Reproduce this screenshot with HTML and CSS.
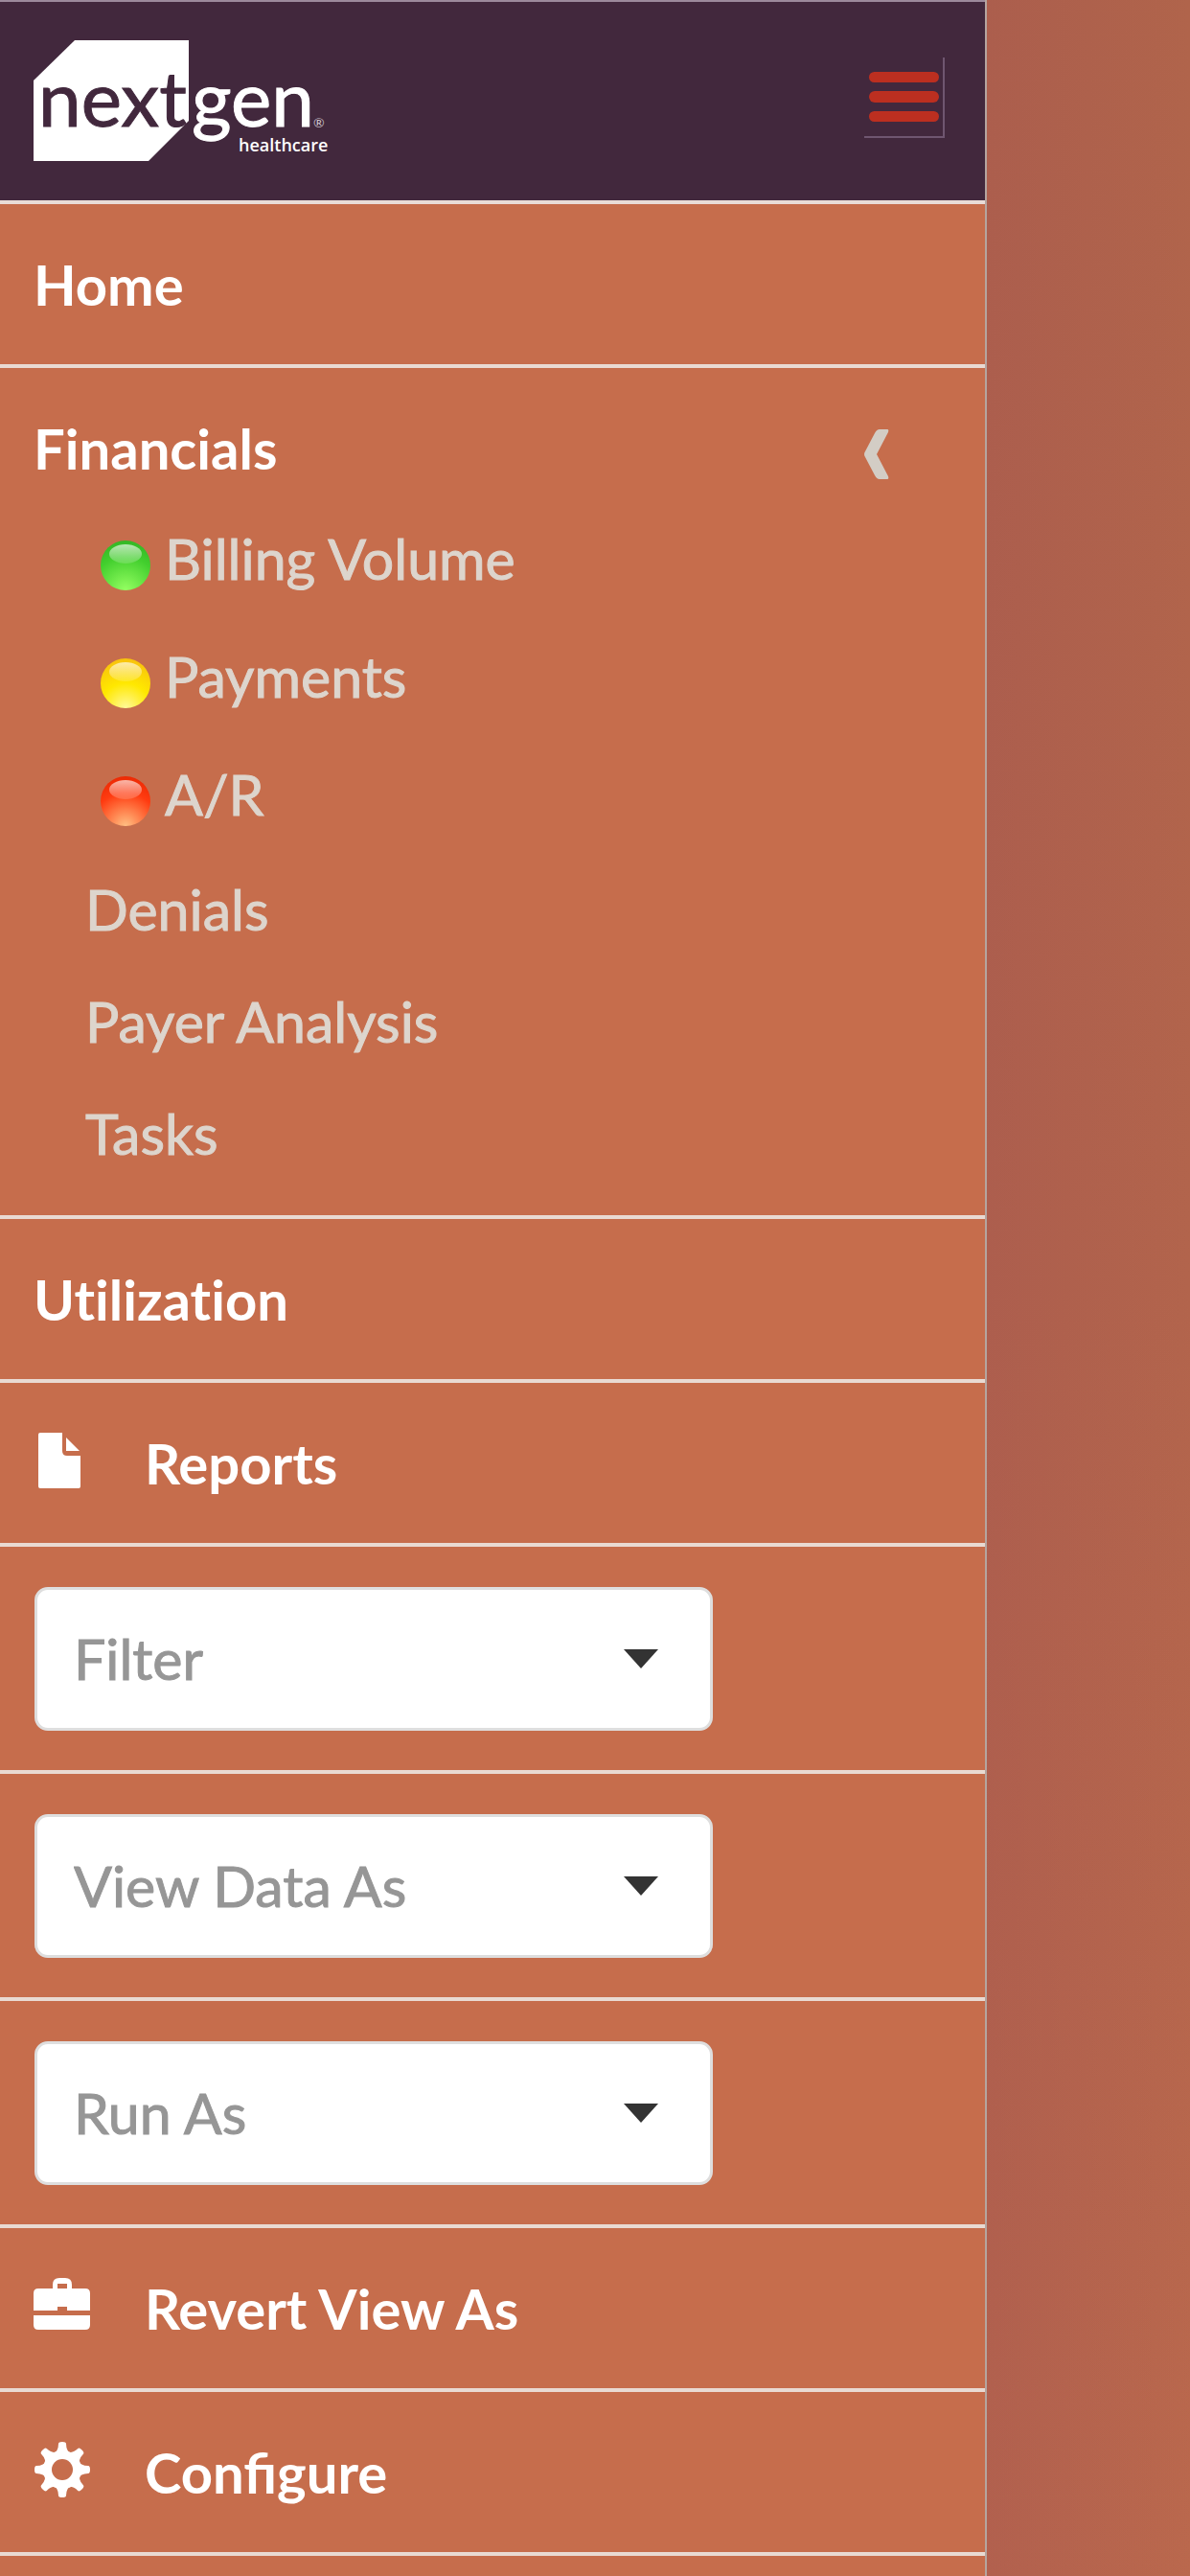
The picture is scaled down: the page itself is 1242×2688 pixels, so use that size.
FILE: index.html
```
<!DOCTYPE html>
<html lang="en">
<head>
    <meta charset="UTF-8">
    <meta name="viewport" content="width=device-width, initial-scale=1.0">
    <title>NextGen Healthcare</title>
    <link rel="stylesheet" href="styles.css">
</head>
<body>
    <div class="page">
        <nav class="sidebar">
            <header class="topbar">
                <a href="#" class="logo" aria-label="NextGen Healthcare">
                    <svg width="320" height="126" viewBox="0 0 320 126">
                        <polygon points="43,0 162,0 162,84 120,126 0,126 0,42" fill="#fff"/>
                        <text class="logo-next" x="5" y="90">next</text>
                        <text class="logo-gen" x="165" y="90">gen</text>
                        <text class="logo-reg" x="292" y="91">®</text>
                        <text class="logo-sub" x="214" y="116">healthcare</text>
                    </svg>
                </a>
                <button type="button" class="menu-toggle" aria-label="Toggle menu">
                    <span></span>
                    <span></span>
                    <span></span>
                </button>
            </header>

            <ul class="menu">
                <li><a href="#" class="menu-link">Home</a></li>
                <li class="menu-group">
                    <a href="#" class="menu-link group-title">
                        Financials
                        <svg class="chevron" width="26" height="52" viewBox="0 0 26 52">
                            <path d="M16 0H24Q26 0 25 3L13 26L25 49Q26 52 24 52H16Q13 52 11 48L1 29Q-1 26 1 23L11 4Q13 0 16 0Z" fill="#d3cdc5"/>
                        </svg>
                    </a>
                    <ul class="submenu">
                        <li><a href="#" class="sub-link has-dot"><span class="dot green"></span>Billing Volume</a></li>
                        <li><a href="#" class="sub-link has-dot"><span class="dot yellow"></span>Payments</a></li>
                        <li><a href="#" class="sub-link has-dot"><span class="dot red"></span>A/R</a></li>
                        <li><a href="#" class="sub-link">Denials</a></li>
                        <li><a href="#" class="sub-link">Payer Analysis</a></li>
                        <li><a href="#" class="sub-link">Tasks</a></li>
                    </ul>
                </li>
                <li><a href="#" class="menu-link no-liga">Utilization</a></li>
                <li>
                    <a href="#" class="menu-link">
                        <svg class="icon" width="60" height="60" viewBox="0 0 60 60" fill="#fff">
                            <path d="M7 0H30V19Q30 24 35 24H49V56Q49 58 47 58H7Q5 58 5 56V2Q5 0 7 0Z"/>
                            <path d="M34 5L48 19H34Z"/>
                        </svg>
                        Reports
                    </a>
                </li>
                <li class="menu-select">
                    <select aria-label="Filter">
                        <option>Filter</option>
                    </select>
                </li>
                <li class="menu-select">
                    <select aria-label="View Data As">
                        <option>View Data As</option>
                    </select>
                </li>
                <li class="menu-select">
                    <select aria-label="Run As">
                        <option>Run As</option>
                    </select>
                </li>
                <li>
                    <a href="#" class="menu-link">
                        <svg class="icon" width="60" height="60" viewBox="0 0 60 60" fill="#fff">
                            <path fill-rule="evenodd" d="M20 11V7Q20 0 27 0H33Q40 0 40 7V11H54Q59 11 59 16V34H35V30H25V34H0V16Q0 11 5 11ZM25 11H35V6H25Z"/>
                            <path d="M0 39H59V49Q59 54 54 54H5Q0 54 0 49Z"/>
                        </svg>
                        Revert View As
                    </a>
                </li>
                <li>
                    <a href="#" class="menu-link">
                        <svg class="icon" width="60" height="60" viewBox="0 0 60 60">
                            <g fill="#fff">
                                <path id="tooth" d="M20 13Q26 10 26 2Q26 0 30 0Q34 0 34 2Q34 10 40 13V20H20Z"/>
                                <use href="#tooth" transform="rotate(45 30 29)"/>
                                <use href="#tooth" transform="rotate(90 30 29)"/>
                                <use href="#tooth" transform="rotate(135 30 29)"/>
                                <use href="#tooth" transform="rotate(180 30 29)"/>
                                <use href="#tooth" transform="rotate(225 30 29)"/>
                                <use href="#tooth" transform="rotate(270 30 29)"/>
                                <use href="#tooth" transform="rotate(315 30 29)"/>
                            </g>
                            <circle cx="30" cy="29" r="15" fill="none" stroke="#fff" stroke-width="10"/>
                            <circle cx="30" cy="29" r="11" fill="#c66d4c"/>
                        </svg>
                        Configure
                    </a>
                </li>
            </ul>
        </nav>
        <main class="content"></main>
    </div>
</body>
</html>
```
FILE: styles.css
```
* {
    box-sizing: border-box;
}
body {
    margin: 0;
    font-family: Lato, "Liberation Sans", sans-serif;
    font-size: 59px;
    line-height: 72px;
    color: #fff;
}
a {
    color: inherit;
    text-decoration: none;
}
ul {
    list-style: none;
    margin: 0;
    padding: 0;
}
.page {
    display: flex;
    min-height: 100vh;
}
.sidebar {
    flex: 1;
    background-color: #c66d4c;
    border-right: 2px solid #b5a59f;
}
.content {
    width: 212px;
    background: linear-gradient(to right, rgba(165, 85, 80, 0.4), transparent),
                linear-gradient(to bottom, #b0644b, #b2644c 50%, #ba684d);
}

/* Header */
.topbar {
    display: flex;
    justify-content: space-between;
    align-items: flex-start;
    height: 213px;
    padding: 40px 42px 0 35px;
    background-color: #42283d;
    border-top: 2px solid #9c8a9c;
    border-bottom: 4px solid #e9dcd7;
}
.logo svg {
    display: block;
}
.logo-next, .logo-gen {
    font-size: 80px;
    fill: #42283d;
    stroke: #42283d;
}
.logo-gen {
    fill: #fff;
    stroke: #fff;
}
.logo-reg {
    font-size: 14px;
    fill: #cfc6cd;
}
.logo-sub {
    font-family: "Open Sans", sans-serif;
    font-size: 18px;
    font-weight: 600;
    fill: #fff;
}
.menu-toggle {
    display: flex;
    flex-direction: column;
    gap: 9px;
    width: 84px;
    height: 84px;
    margin-top: 18px;
    padding: 15px 5px;
    background: none;
    border: 0 solid #6f5670;
    border-width: 0 2px 2px 0;
}
.menu-toggle span {
    width: 73px;
    height: 12px;
    border-radius: 6px;
    background-color: #bc2f20;
}

/* Menu */
.menu > li {
    border-bottom: 4px solid #e9dad2;
}
.menu-link {
    display: flex;
    align-items: center;
    padding: 48px 35px 47px;
    font-size: 58px;
    font-weight: bold;
}
.no-liga {
    font-variant-ligatures: none;
}
.icon {
    margin: 0 56px 4px 0;
}
.menu-group {
    padding-bottom: 27px;
}
.group-title {
    justify-content: space-between;
    padding-right: 100px;
    padding-bottom: 17px;
}
.chevron {
    margin-top: 12px;
}
.sub-link {
    display: flex;
    align-items: center;
    height: 117px;
    padding-left: 89px;
    color: #ddd5cd;
    -webkit-text-stroke: 1px #ddd5cd;
}
.has-dot {
    height: 123px;
    padding-left: 105px;
}
.dot {
    position: relative;
    width: 52px;
    height: 52px;
    margin: 14px 15px 0 0;
    border-radius: 50%;
}
/* glossy highlight */
.dot::before {
    content: "";
    position: absolute;
    top: 4px;
    left: 9px;
    width: 34px;
    height: 20px;
    border-radius: 50%;
    background: linear-gradient(rgba(255, 255, 255, 0.65), rgba(255, 255, 255, 0.15));
}
.green {
    background: radial-gradient(circle at 50% 100%, #95ff62 0, #43cf2e 60%, #2fae22 100%);
}
.yellow {
    background: radial-gradient(circle at 50% 100%, #fff99a 0, #ffe800 45%, #f6b810 100%);
}
.red {
    background: radial-gradient(circle at 50% 100%, #ffc083 0, #ff3b10 60%, #e52400 100%);
}

/* Dropdowns */
.menu-select {
    padding: 42px 36px 41px;
}
.menu-select select {
    display: block;
    appearance: none;
    width: 708px;
    max-width: 100%;
    height: 150px;
    padding: 0 38px;
    border: 3px solid #dedede;
    border-radius: 14px;
    background: #fff url("data:image/svg+xml,%3Csvg xmlns='http://www.w3.org/2000/svg' width='36' height='20'%3E%3Cpath d='M0 0H36L18 20Z' fill='%23333'/%3E%3C/svg%3E") no-repeat right 54px center;
    font: inherit;
    color: #969696;
    -webkit-text-stroke: 1px #969696;
}
```
